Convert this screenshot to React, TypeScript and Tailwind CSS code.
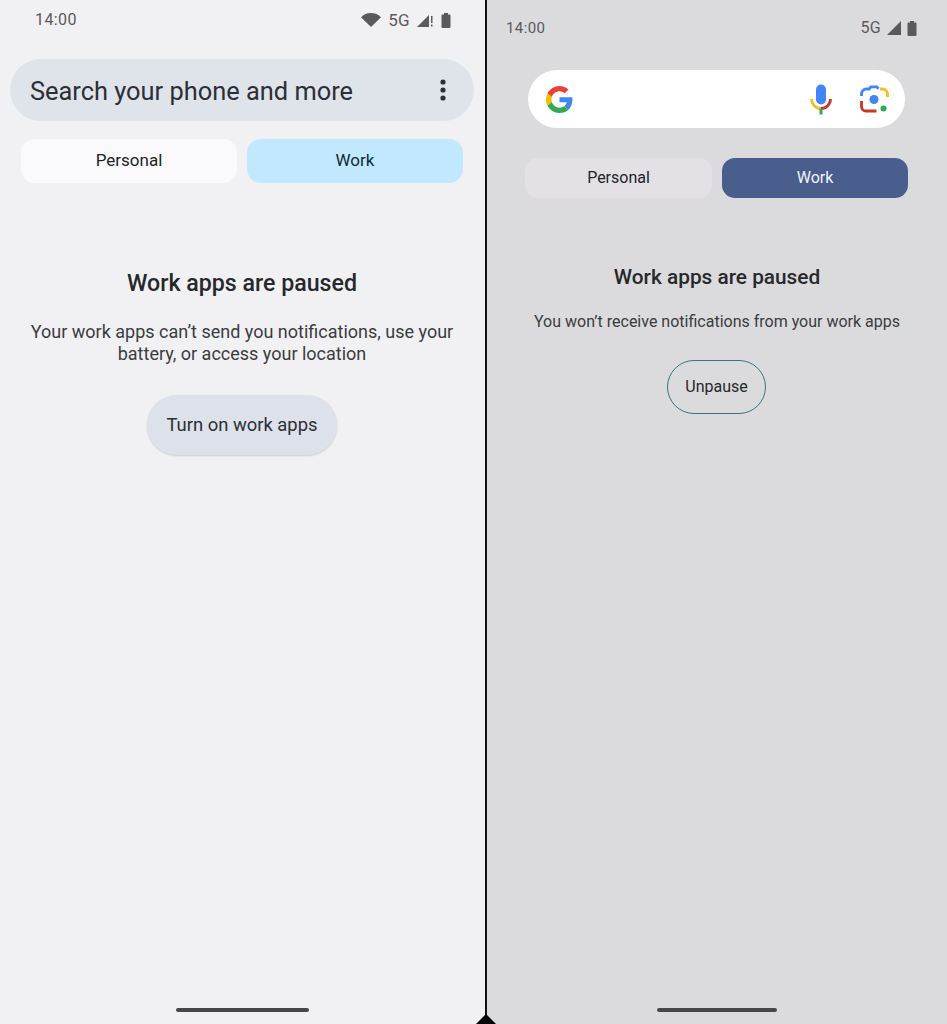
import React from 'react';

const font = { fontFamily: '"Roboto", "Noto Sans", sans-serif' };

function Battery() {
  return (
    <svg width="10" height="15" viewBox="0 0 10 15" className="fill-[#5a5a5e]">
      <path d="M3 0h4v1.500h1.500a1 1 0 0 1 1 1V14a1 1 0 0 1-1 1h-7a1 1 0 0 1-1-1V2.500a1 1 0 0 1 1-1H3z" />
    </svg>
  );
}

function GoogleLogo() {
  return (
    <svg width="27" height="27" viewBox="0 0 48 48">
      <path fill="#EA4335" d="M24 9.500c3.540 0 6.710 1.220 9.210 3.600l6.850-6.850C35.900 2.380 30.470 0 24 0 14.620 0 6.510 5.380 2.560 13.220l7.980 6.190C12.430 13.720 17.740 9.500 24 9.500z" />
      <path fill="#4285F4" d="M46.980 24.550c0-1.570-.15-3.090-.38-4.550H24v9.020h12.940c-.58 2.960-2.260 5.480-4.780 7.180l7.730 6c4.510-4.180 7.090-10.360 7.090-17.650z" />
      <path fill="#FBBC05" d="M10.530 28.590c-.48-1.450-.76-2.990-.76-4.590s.27-3.140.76-4.590l-7.980-6.190C.92 16.460 0 20.120 0 24c0 3.880.92 7.540 2.560 10.780l7.970-6.190z" />
      <path fill="#34A853" d="M24 48c6.480 0 11.930-2.130 15.890-5.810l-7.730-6c-2.150 1.450-4.920 2.300-8.160 2.300-6.260 0-11.570-4.220-13.470-9.910l-7.980 6.190C6.510 42.620 14.620 48 24 48z" />
    </svg>
  );
}

function MicIcon() {
  return (
    <svg width="22" height="31" viewBox="0 0 22 31" fill="none">
      <rect x="6" y="0.500" width="10" height="20" rx="5" fill="#4285F4" />
      <path d="M1.500 15a9.500 9.500 0 0 0 9.500 9.500" stroke="#F2BE2C" strokeWidth="2.800" />
      <path d="M20.500 15a9.500 9.500 0 0 1-9.500 9.500" stroke="#C5362B" strokeWidth="2.800" />
      <path d="M11 24.500v6" stroke="#34A853" strokeWidth="3" />
    </svg>
  );
}

function LensIcon() {
  return (
    <svg width="29" height="29" viewBox="0 0 29 29" fill="none">
      <path d="M1.500 11V9a5 5 0 0 1 5-5h2.500l2-2.200h6l1.500 2" stroke="#4285F4" strokeWidth="2.800" />
      <path d="M20 4h2.500a5 5 0 0 1 5 5v3" stroke="#F2BE2C" strokeWidth="2.800" />
      <path d="M1.500 16v5.500a4.500 4.500 0 0 0 4.500 4.500h10.500" stroke="#C5362B" strokeWidth="2.800" />
      <circle cx="14" cy="14.500" r="4.500" fill="#4285F4" />
      <circle cx="23.500" cy="23.500" r="3" fill="#34A853" />
    </svg>
  );
}

export default function App() {
  return (
    <div className="relative flex w-[947px] h-[1024px] overflow-hidden bg-black" style={font}>
      {/* left phone */}
      <div className="w-[485px] h-full bg-[#f1f1f4] flex flex-col items-center relative">
        <div className="w-full h-[38px] pt-[11px] pl-[35px] pr-[34px] flex items-start justify-between text-[#5a5a5e]">
          <span className="text-[16px] leading-[18px] tracking-[0.4px]">14:00</span>
          <div className="flex items-center gap-[7px] h-[18px]">
            <svg width="20" height="14" viewBox="0 0 20 14" className="fill-[#5a5a5e]">
              <path d="M10 14 0 4.200C2.500 1.600 6 0 10 0s7.500 1.600 10 4.200z" />
            </svg>
            <span className="text-[17px] leading-[18px] tracking-[0.3px]">5G</span>
            <svg width="17" height="14" viewBox="0 0 17 14" className="fill-[#5a5a5e]">
              <path d="M0 14 12 2v12z" />
              <rect x="14" y="3" width="1.500" height="7" />
              <rect x="14" y="11.500" width="1.500" height="2" />
            </svg>
            <Battery />
          </div>
        </div>
        <div className="mt-[21px] mr-[1px] w-[464px] h-[62px] rounded-full bg-[#dfe3ea] flex items-center justify-between pl-[20px] pr-[27px]">
          <span className="text-[25.400px] leading-none pt-[4px] text-[#2b2f36]">Search your phone and more</span>
          <svg width="8" height="22" viewBox="0 0 8 22" className="fill-[#2b2f36]">
            <circle cx="4" cy="3" r="2.600" />
            <circle cx="4" cy="11" r="2.600" />
            <circle cx="4" cy="19" r="2.600" />
          </svg>
        </div>
        <div className="mt-[18px] mr-[1px] flex gap-[10px]">
          <div className="w-[216px] h-[44px] rounded-[14px] bg-[#fafafd] flex items-center justify-center text-[17px] text-[#1f2227]">Personal</div>
          <div className="w-[216px] h-[44px] rounded-[14px] bg-[#c1e8ff] flex items-center justify-center text-[17px] text-[#0f2a3a]">Work</div>
        </div>
        <h2 className="mt-[85px] mr-[1px] text-[23.200px] leading-[30px] font-medium text-[#26282c]">Work apps are paused</h2>
        <p className="mt-[23px] mr-[1px] w-[440px] text-center text-[18px] leading-[22px] text-[#3a3c40]">
          Your work apps can’t send you notifications, use your battery, or access your location
        </p>
        <button className="mt-[30px] mr-[1px] w-[190px] h-[60px] rounded-full bg-[#dde2ea] shadow-[0_1px_2px_rgba(0,0,0,0.15)] text-[18.400px] text-[#2b2f36]">
          Turn on work apps
        </button>
        <div className="absolute bottom-[12px] left-[176px] w-[133px] h-[4px] rounded-full bg-[#47474a]" />
      </div>

      {/* divider */}
      <div className="w-[2px] h-full bg-[#111]" />

      {/* right phone */}
      <div className="flex-1 h-full bg-[#dbdbdd] flex flex-col items-center relative">
        <div className="w-full h-[40px] pt-[19px] pl-[19px] pr-[30px] flex items-start justify-between text-[#5a5a5e]">
          <span className="text-[15px] leading-[18px] tracking-[0.4px]">14:00</span>
          <div className="flex items-center gap-[6px] h-[18px]">
            <span className="text-[16px] leading-[18px] tracking-[0.3px]">5G</span>
            <svg width="14" height="14" viewBox="0 0 14 14" className="fill-[#5a5a5e]">
              <path d="M0 14 14 0v14z" />
            </svg>
            <Battery />
          </div>
        </div>
        <div className="mt-[30px] mr-[1px] w-[377px] h-[58px] rounded-full bg-white flex items-center pl-[18px] pr-[16px]">
          <GoogleLogo />
          <div className="ml-auto flex items-center gap-[28px]">
            <MicIcon />
            <LensIcon />
          </div>
        </div>
        <div className="mt-[30px] mr-[1px] flex gap-[10px]">
          <div className="w-[187px] h-[40px] rounded-[13px] bg-[#e3e1e5] flex items-center justify-center text-[16px] text-[#1f2227]">Personal</div>
          <div className="w-[186px] h-[40px] rounded-[13px] bg-[#4a5e8e] flex items-center justify-center text-[16px] text-[#f2f4fa]">Work</div>
        </div>
        <h2 className="mt-[65px] text-[20.800px] leading-[28px] font-medium text-[#26282c]">Work apps are paused</h2>
        <p className="mt-[21px] text-center text-[16px] leading-[20px] text-[#3a3c40]">
          You won’t receive notifications from your work apps
        </p>
        <button className="mt-[28px] mr-[1px] w-[99px] h-[54px] rounded-full border-[1.500px] border-[#357683] text-[16px] text-[#26282c]">
          Unpause
        </button>
        <div className="absolute bottom-[12px] left-[170px] w-[120px] h-[4px] rounded-full bg-[#47474a]" />
      </div>

      {/* fold notch at the bottom of the hinge */}
      <div className="absolute bottom-0 left-[476px] w-0 h-0 border-l-[10px] border-r-[10px] border-b-[10px] border-l-transparent border-r-transparent border-b-black" />
    </div>
  );
}
